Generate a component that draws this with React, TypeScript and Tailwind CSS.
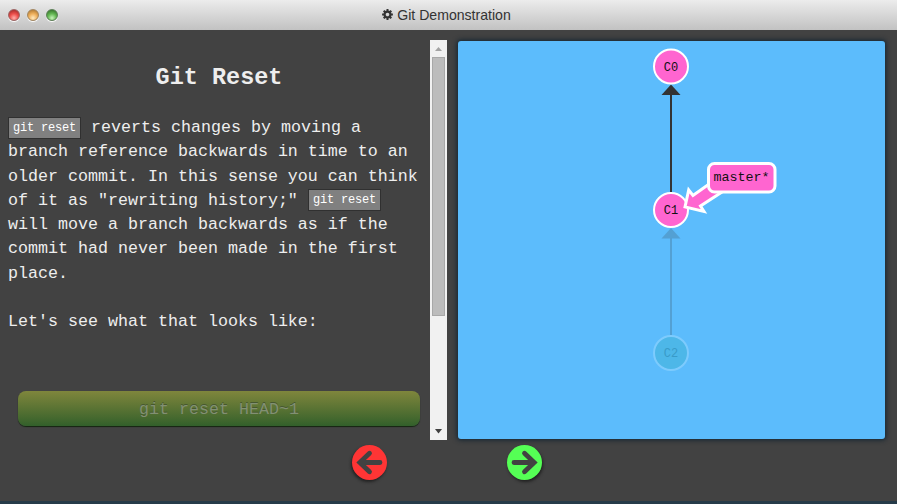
import type { ReactNode } from 'react';

type CommitProps = {
  id: string;
  y: number;
};

const Code = ({ children }: { children: ReactNode }) => (
  <code className="inline-block h-[22px] w-[73px] border border-[#303030] bg-[#808080] pl-1 align-middle font-['Liberation_Mono',monospace] text-[12px] leading-[21px] tracking-[-0.2px] whitespace-nowrap text-white">
    {children}
  </code>
);

const Light = ({ className }: { className: string }) => (
  <span
    className={`h-3 w-3 rounded-full border shadow-[0_1px_1px_#fff] ${className}`}
  />
);

const Cog = () => (
  <svg width="11" height="11" viewBox="-5.5 -5.5 11 11" stroke="#333" fill="none">
    <circle r="2.9" strokeWidth="2.2" />
    <path
      d="M0 -5.4V-3M0 3V5.4M-5.4 0H-3M3 0H5.4M-3.8 -3.8L-2.2 -2.2M2.2 2.2L3.8 3.8M-3.8 3.8L-2.2 2.2M2.2 -2.2L3.8 -3.8"
      strokeWidth="2"
    />
  </svg>
);

const TitleBar = () => (
  <header className="grid h-[30px] shrink-0 grid-cols-[1fr_auto_1fr] items-center bg-linear-to-b from-[#ececec] to-[#c2c2c2] px-2">
    <div className="flex gap-[7px]">
      <Light className="border-[#9d6463] bg-[radial-gradient(circle_at_50%_80%,#ffb0ab_0,#ed4f4b_45%,#8f2322_100%)]" />
      <Light className="border-[#a38660] bg-[radial-gradient(circle_at_50%_80%,#ffeac0_0,#efb05c_45%,#a06c28_100%)]" />
      <Light className="border-[#5d8057] bg-[radial-gradient(circle_at_50%_80%,#c8f3ba_0,#64b853_45%,#28601f_100%)]" />
    </div>
    <h1 className="flex items-center gap-1 pr-[4px] font-['Liberation_Sans',sans-serif] text-[14.1px] text-[#333]">
      <Cog />
      <span className="pt-[2px]">Git Demonstration</span>
    </h1>
  </header>
);

const ScrollBar = () => (
  <div className="mt-[10px] flex h-[400px] w-[17px] shrink-0 flex-col items-center bg-[#f1f1f1]">
    <svg width="17" height="17" className="shrink-0">
      <path d="M5 11L8.5 7L12 11Z" fill="#a3a3a3" />
    </svg>
    <div className="h-[259px] w-[13px] shrink-0 border border-[#a8a8a8] bg-[#bcbcbc]" />
    <svg width="17" height="17" className="mt-auto shrink-0">
      <path d="M5 6L8.5 10.5L12 6Z" fill="#404040" />
    </svg>
  </div>
);

const Commit = ({ id, y }: CommitProps) => (
  <g>
    <circle cx="213" cy={y} r="17" fill="#ff65d0" stroke="#fff" strokeWidth="2" />
    <text x="213" y={y + 4} textAnchor="middle" fontSize="12" fill="#111">
      {id}
    </text>
  </g>
);

const Graph = () => (
  <div className="mt-[11px] ml-[11px] h-[398px] w-[427px] shrink-0 rounded-[3px] bg-[#5cbcfc] shadow-[0_0_5px_1px_#102330]">
    <svg width="427" height="398" className="font-['Liberation_Mono',monospace]">
      {/* parent links */}
      <path d="M213 52V152" stroke="#333" strokeWidth="2" />
      <path d="M213 43.5L222.5 54H203.5Z" fill="#333" />
      <g opacity="0.2">
        <path d="M213 196V295" stroke="#333" strokeWidth="2" />
        <path d="M213 187L222.5 197.5H203.5Z" fill="#333" />
      </g>

      <Commit id="C0" y={25.5} />
      <Commit id="C1" y={169} />
      <g>
        <circle cx="213" cy="312" r="17" fill="#4db7e8" stroke="#7dcbfd" strokeWidth="2" />
        <text x="213" y="316" textAnchor="middle" fontSize="12" fill="#399bc9">
          C2
        </text>
      </g>

      {/* branch pointer */}
      <path
        d="M227 166L230.7 149L235 154.5L254 141L264 151L242.5 165L246 170.5Z"
        fill="#ff65d0"
        stroke="#fff"
        strokeWidth="3"
      />
      <rect x="250.5" y="122.5" width="66.5" height="28.5" rx="6" fill="#ff65d0" stroke="#fff" strokeWidth="3" />
      <text x="283.5" y="140" textAnchor="middle" fontSize="13.4" fill="#111">
        master*
      </text>
    </svg>
  </div>
);

const ArrowIcon = ({ flip }: { flip?: boolean }) => (
  <svg width="35" height="35" viewBox="0 0 35 35" className={flip ? '-scale-x-100' : ''}>
    <path
      d="M17.5 8.2L7.8 17.5L17.5 26.8M9 17.5H28"
      fill="none"
      stroke="#424242"
      strokeWidth="4.8"
      strokeLinecap="round"
      strokeLinejoin="miter"
    />
  </svg>
);

export default function App() {
  return (
    <div className="flex h-[504px] w-[897px] flex-col overflow-hidden border-b-[3px] border-[#263b49] bg-[#424242]">
      <TitleBar />
      <main className="flex h-[410px] shrink-0">
        <section className="mt-[10px] h-[400px] w-[430px] shrink-0 pl-2 font-['Liberation_Mono',monospace] text-[16.67px] leading-[24.25px] text-[#eee]">
          <h2 className="pt-[23px] text-center text-[23.5px] leading-[30px] font-bold">
            Git Reset
          </h2>
          <p className="mt-[23px] whitespace-nowrap">
            <Code>git reset</Code> reverts changes by moving a<br />
            branch reference backwards in time to an<br />
            older commit. In this sense you can think<br />
            of it as "rewriting history;" <Code>git reset</Code>
            <br />
            will move a branch backwards as if the<br />
            commit had never been made in the first<br />
            place.
          </p>
          <p className="mt-6">Let's see what that looks like:</p>
          <button className="mt-[57px] ml-[10px] block h-[35px] w-[402px] rounded-[8px] bg-linear-to-b from-[#7f863c] to-[#32602b] pt-[3px] text-[16.67px] text-[#829073] shadow-[0_1px_1px_#142510] [text-shadow:0_-1px_0_#475830]">
            git reset HEAD~1
          </button>
        </section>
        <ScrollBar />
        <Graph />
      </main>
      <nav className="flex gap-[120px] pt-[5px] pl-[352px]">
        <button className="h-[35px] w-[35px] rounded-full bg-[#ff3535] shadow-[-1px_2px_3px_#222]">
          <ArrowIcon />
        </button>
        <button className="h-[35px] w-[35px] rounded-full bg-[#55ff55] shadow-[1px_2px_3px_#222]">
          <ArrowIcon flip />
        </button>
      </nav>
    </div>
  );
}
